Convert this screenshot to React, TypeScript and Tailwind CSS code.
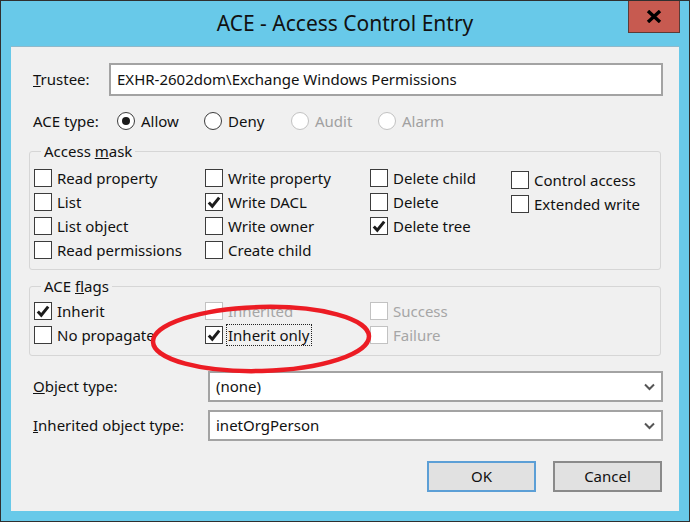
import React from 'react';

const FONT = { fontFamily: '"Noto Sans", "Open Sans", Arial, sans-serif' };

function Check({ on, dim }: { on?: boolean; dim?: boolean }) {
  return (
    <span
      className={`w-[18px] h-[18px] shrink-0 bg-white border flex items-center justify-center ${
        dim ? 'border-[#c2c2c2]' : 'border-[#3c3c3c]'
      }`}
    >
      {on && (
        <svg width="14" height="14" viewBox="0 0 14 14">
          <path d="M1.8 7.4 L5.3 11.2 L12.2 2.6" fill="none" stroke="#1c1c1c" strokeWidth="3" strokeLinejoin="miter" />
        </svg>
      )}
    </span>
  );
}

function CheckItem({ label, on, dim, focus }: { label: string; on?: boolean; dim?: boolean; focus?: boolean }) {
  return (
    <div className="h-6 flex items-center gap-[5px]">
      <Check on={on} dim={dim} />
      <span
        className={`leading-[20px] whitespace-nowrap ${dim ? 'text-[#a6a6a6]' : 'text-[#111]'} ${
          focus ? 'outline outline-1 outline-dotted outline-[#222] -ml-[1px] pl-[1px] pr-[2px]' : ''
        }`}
      >
        {label}
      </span>
    </div>
  );
}

function Radio({ label, on, dim }: { label: string; on?: boolean; dim?: boolean }) {
  return (
    <div className="w-[87px] h-6 flex items-center gap-[6px]">
      <span
        className={`w-[18px] h-[18px] rounded-full bg-white border flex items-center justify-center ${
          dim ? 'border-[#c2c2c2]' : 'border-[#3c3c3c]'
        }`}
      >
        {on && <span className="w-2 h-2 rounded-full bg-[#1a1a1a]" />}
      </span>
      <span className={dim ? 'text-[#a0a0a0]' : 'text-[#111]'}>{label}</span>
    </div>
  );
}

function Combo({ value }: { value: string }) {
  return (
    <div className="flex-1 h-[31px] bg-white border-2 border-[#a3a3a3] flex items-center pl-[6px] pr-[6px]">
      <span className="flex-1 text-[#111]">{value}</span>
      <svg width="11" height="8" viewBox="0 0 11 8">
        <path d="M1 1.5 L5.5 6 L10 1.5" fill="none" stroke="#555" strokeWidth="2" />
      </svg>
    </div>
  );
}

export default function App() {
  return (
    <div
      className="relative w-[690px] h-[522px] border border-[#2f2f2f] bg-[#68c9e9] flex flex-col text-[15px] overflow-hidden"
      style={FONT}
    >
      {/* title bar */}
      <div className="relative h-[45px] shrink-0 flex items-center justify-center">
        <span className="text-[21px] text-[#111] leading-none pb-[1px]">ACE - Access Control Entry</span>
        <div className="absolute right-[9px] top-0 w-[52px] h-[32px] bg-[#c75a50] border border-[#5b3b37] border-t-0 flex items-center justify-center">
          <svg width="16" height="13" viewBox="0 0 16 13">
            <path d="M2 1 L14 12 M14 1 L2 12" stroke="#000" strokeWidth="3.4" />
          </svg>
        </div>
      </div>

      {/* client */}
      <div className="mx-[10px] h-[465px] shrink-0 bg-[#f0f0f0] border-t border-[#8fb9cb] flex flex-col pt-[16px] pl-[18px] pr-[16px]">
        <div className="flex items-center">
          <span className="w-[80px] pl-[4px] text-[#111]">
            <u>T</u>rustee:
          </span>
          <div className="flex-1 h-[33px] bg-white border-2 border-[#a3a3a3] flex items-center pl-[6px] text-[#111]">
            EXHR-2602dom\Exchange Windows Permissions
          </div>
        </div>

        <div className="mt-[13px] flex items-center">
          <span className="w-[88px] pl-[4px] text-[#111]">ACE type:</span>
          <Radio label="Allow" on />
          <Radio label="Deny" />
          <Radio label="Audit" dim />
          <Radio label="Alarm" dim />
        </div>

        <fieldset className="mt-[7px] mr-[2px] border border-[#d6d6d6] rounded-[3px] pl-[4px] pt-[4px] pb-[7px]">
          <legend className="ml-[7px] px-[3px] leading-[22px] text-[#111]">
            Access <u>m</u>ask
          </legend>
          <div className="grid grid-cols-[171px_165px_141px_1fr]">
            <div className="flex flex-col">
              <CheckItem label="Read property" />
              <CheckItem label="List" />
              <CheckItem label="List object" />
              <CheckItem label="Read permissions" />
            </div>
            <div className="flex flex-col">
              <CheckItem label="Write property" />
              <CheckItem label="Write DACL" on />
              <CheckItem label="Write owner" />
              <CheckItem label="Create child" />
            </div>
            <div className="flex flex-col">
              <CheckItem label="Delete child" />
              <CheckItem label="Delete" />
              <CheckItem label="Delete tree" on />
            </div>
            <div className="flex flex-col pt-[2px]">
              <CheckItem label="Control access" />
              <CheckItem label="Extended write" />
            </div>
          </div>
        </fieldset>

        <fieldset className="mt-[5px] mr-[2px] border border-[#d6d6d6] rounded-[3px] pl-[4px] pt-[2px] pb-[8px]">
          <legend className="ml-[7px] px-[3px] leading-[22px] text-[#111]">
            ACE <u>f</u>lags
          </legend>
          <div className="grid grid-cols-[171px_165px_1fr]">
            <div className="flex flex-col">
              <CheckItem label="Inherit" on />
              <CheckItem label="No propagate" />
            </div>
            <div className="flex flex-col">
              <CheckItem label="Inherited" dim />
              <CheckItem label="Inherit only" on focus />
            </div>
            <div className="flex flex-col">
              <CheckItem label="Success" dim />
              <CheckItem label="Failure" dim />
            </div>
          </div>
        </fieldset>

        <div className="mt-[15px] flex items-center">
          <span className="w-[179px] pl-[4px] text-[#111]">
            <u>O</u>bject type:
          </span>
          <Combo value="(none)" />
        </div>
        <div className="mt-[8px] flex items-center">
          <span className="w-[179px] pl-[4px] text-[#111]">
            <u>I</u>nherited object type:
          </span>
          <Combo value="inetOrgPerson" />
        </div>

        <div className="mt-[20px] mr-[1px] flex justify-end gap-[17px]">
          <button className="w-[109px] h-[31px] bg-[#e1e1e1] border-2 border-[#5c9fd6] text-[#111]">OK</button>
          <button className="w-[109px] h-[31px] bg-[#e1e1e1] border-2 border-[#8a8a8a] text-[#111]">Cancel</button>
        </div>
      </div>

      {/* red annotation ellipse */}
      <svg className="absolute inset-0 pointer-events-none" width="690" height="522" viewBox="0 0 690 522">
        <ellipse
          cx="260"
          cy="338"
          rx="108"
          ry="32"
          fill="none"
          stroke="#ec1c24"
          strokeWidth="4.5"
          transform="rotate(-1.5 260 338)"
        />
      </svg>
    </div>
  );
}
